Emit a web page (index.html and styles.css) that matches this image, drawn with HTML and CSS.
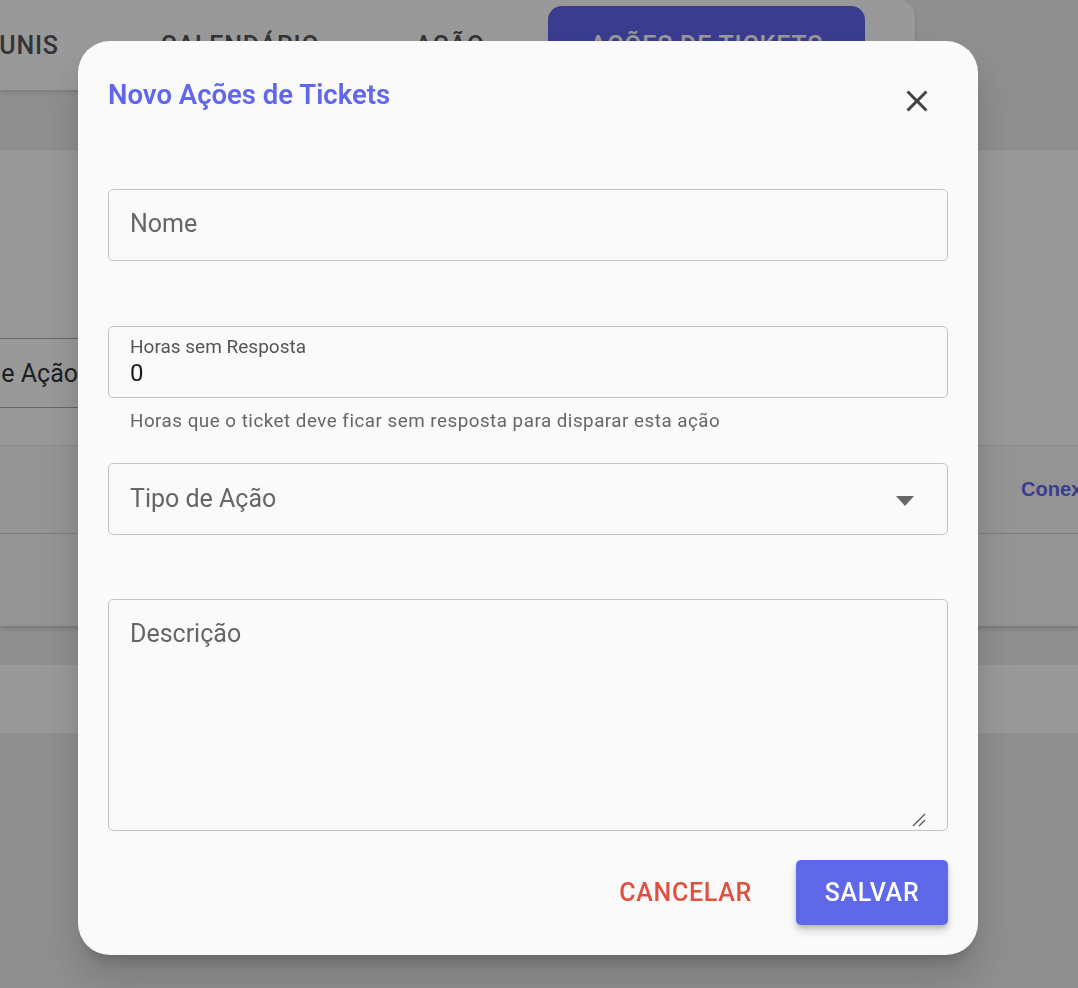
FILE: index.html
```html
<!DOCTYPE html>
<html>
<head>
    <title>Ações de Tickets</title>
    <link rel="stylesheet" href="styles.css">
</head>
<body>

<div class="tabs">
    <div class="tab-track">
        <div class="tab tab-unis">UNIS</div>
        <div class="tab tab-cal">CALENDÁRIO</div>
        <div class="tab tab-acao">AÇÃO</div>
        <div class="tab tab-active">AÇÕES DE TICKETS</div>
    </div>
</div>

<div class="paper">
    <div class="filter">
        <div class="filter-field">Tipo de Ação</div>
    </div>
    <div class="table-head">
        <span class="col-link">Conexão</span>
    </div>
    <div class="table-row"></div>
</div>

<div class="band"></div>

<div class="backdrop"></div>

<div class="dialog">
    <div class="dialog-header">
        <h2 class="dialog-title">Novo Ações de Tickets</h2>
        <button class="close-btn" aria-label="Fechar">
            <svg width="24" height="24" viewBox="0 0 24 24">
                <path d="M19 6.41L17.59 5 12 10.59 6.41 5 5 6.41 10.59 12 5 17.59 6.41 19 12 13.41 17.59 19 19 17.59 13.41 12z" fill="#444"/>
            </svg>
        </button>
    </div>

    <div class="field field-nome">
        <span class="field-label">Nome</span>
    </div>

    <div class="field field-horas">
        <span class="field-label-small">Horas sem Resposta</span>
        <span class="field-value">0</span>
    </div>
    <div class="helper">Horas que o ticket deve ficar sem resposta para disparar esta ação</div>

    <div class="field field-tipo">
        <span class="field-label">Tipo de Ação</span>
        <svg class="select-arrow" width="18" height="10" viewBox="0 0 18 10">
            <path d="M0 0 L18 0 L9 10 Z" fill="#666"/>
        </svg>
    </div>

    <div class="field field-desc">
        <span class="field-label">Descrição</span>
        <svg class="grip" width="14" height="14" viewBox="0 0 14 14">
            <path d="M1 13 L13 1 M7 13 L13 7" stroke="#555" stroke-width="1.3"/>
        </svg>
    </div>

    <div class="actions">
        <button class="btn-cancel">CANCELAR</button>
        <button class="btn-save">SALVAR</button>
    </div>
</div>

</body>
</html>
```

FILE: styles.css
```css
body {
    margin: 0;
    font-family: Roboto, "Noto Sans", sans-serif;
    background-color: #eeeeee;
    min-height: 988px;
    overflow: hidden;
}

/* page behind the dialog */

.tabs {
    width: 915px;
    height: 90px;
    background-color: #fff;
    border-top-right-radius: 16px;
    overflow: hidden;
    box-shadow: 0 2px 4px rgba(0, 0, 0, 0.15);
}

.tab-track {
    display: flex;
    margin-left: -70px;
    height: 100%;
}

.tab {
    display: flex;
    align-items: center;
    justify-content: center;
    font-size: 25px;
    font-weight: 500;
    letter-spacing: 0.8px;
    color: #555;
    white-space: nowrap;
}

.tab-unis { width: 198px; }
.tab-cal { width: 224px; }
.tab-acao { width: 196px; }

.tab-active {
    width: 317px;
    margin: 6px 0;
    border-radius: 14px;
    background-color: #6166ee;
    color: #fff;
}

.paper {
    margin-top: 60px;
    height: 475px;
    background-color: #fff;
    box-shadow: 0 3px 5px rgba(0, 0, 0, 0.2);
}

.filter {
    height: 295px;
    padding-top: 188px;
    box-sizing: border-box;
}

.filter-field {
    width: 300px;
    margin-left: -160px;
    height: 70px;
    border-top: 1px solid #aaa;
    border-bottom: 1px solid #aaa;
    box-sizing: border-box;
    display: flex;
    align-items: center;
    justify-content: flex-end;
    padding-right: 62px;
    font-size: 25px;
    color: #333;
    white-space: nowrap;
}

.table-head {
    height: 87px;
    background-color: #f7f7f7;
    border-top: 1px solid #e6e6e6;
    border-bottom: 1px solid #cfcfcf;
    display: flex;
    align-items: center;
    padding-left: 1021px;
    white-space: nowrap;
}

.col-link {
    font-family: "Liberation Sans", Arial, sans-serif;
    font-weight: 700;
    font-size: 20px;
    color: #6166ee;
}

.table-row {
    height: 92px;
    background-color: #f7f7f7;
}

.band {
    margin-top: 40px;
    height: 68px;
    background-color: #fff;
}

/* dialog */

.backdrop {
    position: fixed;
    inset: 0;
    background-color: rgba(0, 0, 0, 0.4);
}

.dialog {
    position: fixed;
    left: 78px;
    top: 41px;
    width: 900px;
    box-sizing: border-box;
    padding: 26px 30px 30px;
    background-color: #fafafa;
    border-radius: 32px;
    box-shadow: 0 11px 15px -7px rgba(0, 0, 0, 0.2), 0 24px 38px 3px rgba(0, 0, 0, 0.14);
    display: flex;
    flex-direction: column;
}

.dialog-header {
    display: flex;
    justify-content: space-between;
    align-items: flex-start;
    height: 56px;
}

.dialog-title {
    margin: 0;
    line-height: 56px;
    font-size: 27.5px;
    font-weight: 600;
    color: #6166ee;
}

.close-btn {
    width: 40px;
    height: 40px;
    margin-top: 14px;
    margin-right: 11px;
    padding: 0;
    border: none;
    background: none;
    display: flex;
    align-items: center;
    justify-content: center;
}

.close-btn svg {
    width: 36px;
    height: 36px;
}

.field {
    position: relative;
    height: 72px;
    border: 1px solid #c4c4c4;
    border-radius: 5px;
    box-sizing: border-box;
    padding: 0 21px;
    display: flex;
    align-items: center;
}

.field-label {
    font-size: 25px;
    color: #666;
}

.field-nome {
    margin-top: 66px;
    padding-bottom: 4px;
}

.field-horas {
    margin-top: 65px;
    flex-direction: column;
    align-items: flex-start;
    justify-content: flex-start;
    padding-top: 10px;
}

.field-label-small {
    font-size: 19px;
    line-height: 20px;
    color: #555;
}

.field-value {
    margin-top: 2px;
    font-size: 24px;
    line-height: 28px;
    color: #1c1c1c;
}

.helper {
    margin: 13px 0 0 22px;
    font-size: 18.8px;
    line-height: 20px;
    letter-spacing: 0.5px;
    color: #666;
}

.field-tipo {
    margin-top: 32px;
    justify-content: space-between;
    padding-right: 33px;
    padding-bottom: 2px;
}

.select-arrow {
    margin-top: 6px;
}

.field-desc {
    margin-top: 64px;
    height: 232px;
    align-items: flex-start;
    padding-top: 19px;
}

.grip {
    position: absolute;
    right: 21px;
    bottom: 3px;
}

.actions {
    margin-top: 29px;
    height: 65px;
    display: flex;
    justify-content: flex-end;
    align-items: center;
    gap: 24px;
}

.btn-cancel,
.btn-save {
    font-family: Roboto, "Noto Sans", sans-serif;
    font-size: 25px;
    font-weight: 500;
    letter-spacing: 0.7px;
    border: none;
    cursor: pointer;
}

.btn-cancel {
    background: none;
    color: #e0503f;
    padding: 0 20px;
}

.btn-save {
    width: 152px;
    height: 65px;
    background-color: #6068ea;
    color: #fff;
    border-radius: 5px;
    box-shadow: 0 3px 5px -1px rgba(0, 0, 0, 0.2), 0 6px 10px 0 rgba(0, 0, 0, 0.14);
}
```
